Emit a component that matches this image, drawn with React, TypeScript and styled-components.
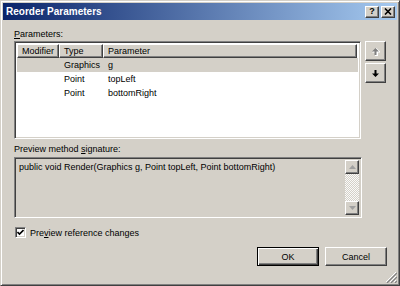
import React from "react";
import styled, { createGlobalStyle, css } from "styled-components";

const GlobalStyle = createGlobalStyle`
  html, body { margin: 0; padding: 0; background: #d4d0c8; }
  body { font-family: "Liberation Sans", Arial, sans-serif; font-size: 9px; color: #000; }
  * { box-sizing: border-box; }
`;

const raised = css`
  border: 1px solid;
  border-color: #ffffff #404040 #404040 #ffffff;
  box-shadow: inset -1px -1px #808080, inset 1px 1px #d4d0c8;
`;

const sunken = css`
  border: 1px solid;
  border-color: #808080 #ffffff #ffffff #808080;
  box-shadow: inset 1px 1px #404040, inset -1px -1px #d4d0c8;
`;

const Window = styled.div`
  position: relative;
  width: 400px;
  height: 286px;
  background: #d4d0c8;
  border: 1px solid;
  border-color: #d4d0c8 #404040 #404040 #d4d0c8;
  box-shadow: inset 1px 1px #ffffff, inset -1px -1px #808080;
  padding: 2px;
  display: flex;
  flex-direction: column;
`;

const TitleBar = styled.div`
  height: 17px;
  display: flex;
  align-items: center;
  justify-content: space-between;
  padding: 0 2px 0 3px;
  background: linear-gradient(to right, #0a246a, #a6caf0);
`;

const TitleText = styled.span`
  color: #fff;
  font-weight: bold;
  font-size: 10px;
`;

const CaptionButtons = styled.div`
  display: flex;
  gap: 2px;
`;

const CaptionButton = styled.div`
  width: 14px;
  height: 12px;
  background: #d4d0c8;
  ${raised};
  display: flex;
  align-items: center;
  justify-content: center;
  font-weight: bold;
  font-size: 9px;
  line-height: 1;
`;

const Body = styled.div`
  flex: 1;
  display: flex;
  flex-direction: column;
  padding: 8px 10px 0 11px;
`;

const Label = styled.div<{ $gap?: number }>`
  height: 13px;
  line-height: 13px;
  margin-top: ${(p) => p.$gap ?? 0}px;
  padding-left: 0;
`;

const U = styled.span`
  text-decoration: underline;
`;

const ListArea = styled.div`
  display: grid;
  grid-template-columns: 347px 21px;
  column-gap: 4px;
  height: 98px;
`;

const ListBox = styled.div`
  background: #fff;
  ${sunken};
  padding: 2px;
  display: flex;
  flex-direction: column;
`;

const cols = css`
  display: grid;
  grid-template-columns: 42px 44px 1fr;
`;

const HeaderRow = styled.div`
  ${cols};
  height: 14px;
  margin-right: 1px;
`;

const HeaderCell = styled.div`
  background: #d4d0c8;
  ${raised};
  box-shadow: inset -1px -1px #808080;
  padding-left: 4px;
  line-height: 12px;
`;

const Row = styled.div<{ $selected?: boolean }>`
  ${cols};
  height: 14px;
  line-height: 14px;
  background: ${(p) => (p.$selected ? "#d4d0c8" : "transparent")};
`;

const Cell = styled.div`
  padding-left: 5px;
  white-space: nowrap;
`;

const SideButtons = styled.div`
  display: flex;
  flex-direction: column;
  gap: 2px;
`;

const ArrowButton = styled.div`
  width: 21px;
  height: 20px;
  background: #d4d0c8;
  ${raised};
  display: flex;
  align-items: center;
  justify-content: center;
`;

const PreviewBox = styled.div`
  width: 348px;
  height: 61px;
  margin-top: 1px;
  background: #d4d0c8;
  ${sunken};
  padding: 2px;
  display: flex;
`;

const SigText = styled.div`
  flex: 1;
  padding: 1px 0 0 2px;
  line-height: 13px;
  white-space: nowrap;
`;

const ScrollBar = styled.div`
  width: 14px;
  display: flex;
  flex-direction: column;
`;

const ScrollArrow = styled.div`
  height: 14px;
  background: #d4d0c8;
  ${raised};
  display: flex;
  align-items: center;
  justify-content: center;
`;

const ScrollTrack = styled.div`
  flex: 1;
  background-color: #ece9e4;
  background-image: repeating-conic-gradient(#ffffff 0 25%, #d4d0c8 0 50%);
  background-size: 2px 2px;
  opacity: 0.9;
`;

const CheckRow = styled.label`
  margin-top: 8px;
  height: 13px;
  display: flex;
  align-items: center;
  gap: 4px;
  padding-left: 1px;
`;

const CheckBox = styled.div`
  width: 11px;
  height: 11px;
  background: #fff;
  ${sunken};
  display: flex;
  align-items: center;
  justify-content: center;
`;

const ButtonRow = styled.div`
  margin-top: 8px;
  display: flex;
  justify-content: flex-end;
  gap: 6px;
`;

const PushButton = styled.div<{ $default?: boolean }>`
  width: 62px;
  height: 19px;
  background: #d4d0c8;
  display: flex;
  align-items: center;
  justify-content: center;
  ${(p) =>
    p.$default
      ? css`
          border: 1px solid #000;
          box-shadow: inset 1px 1px #fff, inset -1px -1px #404040, inset -2px -2px #808080;
        `
      : raised};
`;

const Grip = styled.svg`
  position: absolute;
  right: 2px;
  bottom: 2px;
`;

const Tri = ({ up, color }: { up?: boolean; color: string }) => (
  <svg width="7" height="4" viewBox="0 0 7 4">
    {up ? (
      <path d="M3.5 0 L7 4 L0 4 Z" fill={color} />
    ) : (
      <path d="M0 0 L7 0 L3.5 4 Z" fill={color} />
    )}
  </svg>
);

const MoveArrow = ({ up, disabled }: { up?: boolean; disabled?: boolean }) => {
  const c = disabled ? "#808080" : "#000";
  return (
    <svg width="9" height="9" viewBox="0 0 9 9">
      {disabled && (
        <path
          transform="translate(1,1)"
          d={up ? "M4.5 0 L9 4.5 L6 4.5 L6 9 L3 9 L3 4.5 L0 4.5 Z" : "M3 0 L6 0 L6 4.5 L9 4.5 L4.5 9 L0 4.5 L3 4.5 Z"}
          fill="#fff"
        />
      )}
      <path
        d={up ? "M4.5 1 L8 4.5 L5.5 4.5 L5.5 8 L3.5 8 L3.5 4.5 L1 4.5 Z" : "M3.5 1 L5.5 1 L5.5 4.5 L8 4.5 L4.5 8 L1 4.5 L3.5 4.5 Z"}
        fill={c}
      />
    </svg>
  );
};

const rows = [
  { mod: "", type: "Graphics", name: "g", selected: true },
  { mod: "", type: "Point", name: "topLeft" },
  { mod: "", type: "Point", name: "bottomRight" },
];

export default function App() {
  return (
    <>
      <GlobalStyle />
      <Window>
        <TitleBar>
          <TitleText>Reorder Parameters</TitleText>
          <CaptionButtons>
            <CaptionButton>?</CaptionButton>
            <CaptionButton>
              <svg width="8" height="7" viewBox="0 0 8 7">
                <path d="M1 0.5 L7 6.5 M7 0.5 L1 6.5" stroke="#000" strokeWidth="1.6" />
              </svg>
            </CaptionButton>
          </CaptionButtons>
        </TitleBar>
        <Body>
          <Label>
            <U>P</U>arameters:
          </Label>
          <ListArea>
            <ListBox>
              <HeaderRow>
                <HeaderCell>Modifier</HeaderCell>
                <HeaderCell>Type</HeaderCell>
                <HeaderCell>Parameter</HeaderCell>
              </HeaderRow>
              {rows.map((r, i) => (
                <Row key={i} $selected={r.selected}>
                  <Cell>{r.mod}</Cell>
                  <Cell>{r.type}</Cell>
                  <Cell>{r.name}</Cell>
                </Row>
              ))}
            </ListBox>
            <SideButtons>
              <ArrowButton>
                <MoveArrow up disabled />
              </ArrowButton>
              <ArrowButton>
                <MoveArrow />
              </ArrowButton>
            </SideButtons>
          </ListArea>
          <Label $gap={4}>
            Preview method <U>s</U>ignature:
          </Label>
          <PreviewBox>
            <SigText>public void Render(Graphics g, Point topLeft, Point bottomRight)</SigText>
            <ScrollBar>
              <ScrollArrow>
                <Tri up color="#a0a0a0" />
              </ScrollArrow>
              <ScrollTrack />
              <ScrollArrow>
                <Tri color="#a0a0a0" />
              </ScrollArrow>
            </ScrollBar>
          </PreviewBox>
          <CheckRow>
            <CheckBox>
              <svg width="7" height="7" viewBox="0 0 7 7">
                <path d="M0.5 3 L2.5 5 L6.5 1" stroke="#000" strokeWidth="1.6" fill="none" />
              </svg>
            </CheckBox>
            <span>
              Pre<U>v</U>iew reference changes
            </span>
          </CheckRow>
          <ButtonRow>
            <PushButton $default>OK</PushButton>
            <PushButton>Cancel</PushButton>
          </ButtonRow>
        </Body>
        <Grip width="12" height="12" viewBox="0 0 12 12">
          <path d="M11 1 L1 11 M11 5 L5 11 M11 9 L9 11" stroke="#fff" strokeWidth="1" />
          <path d="M12 2 L2 12 M12 6 L6 12 M12 10 L10 12" stroke="#808080" strokeWidth="1.2" />
        </Grip>
      </Window>
    </>
  );
}
